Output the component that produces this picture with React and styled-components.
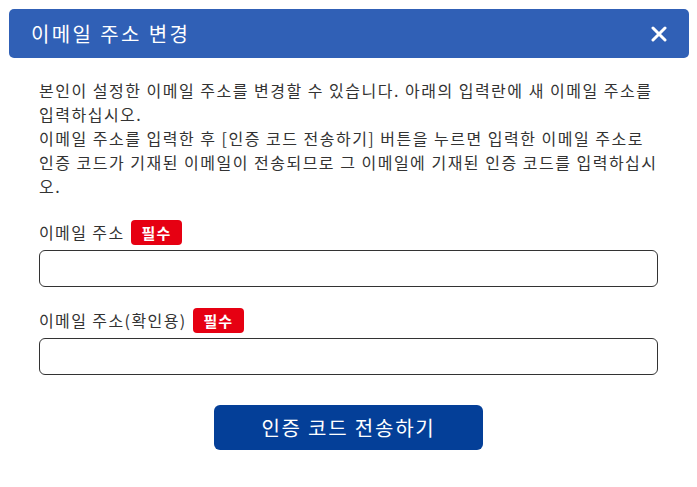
import React from "react";
import styled, { createGlobalStyle } from "styled-components";

const GlobalStyle = createGlobalStyle`
  body {
    margin: 0;
    background: #ffffff;
    font-family: "Noto Sans CJK KR", "Noto Sans", sans-serif;
  }
`;

function CloseIcon() {
  return (
    <svg width="16" height="16" viewBox="0 0 16 16">
      <path
        d="M2 2 L14 14 M14 2 L2 14"
        stroke="#ffffff"
        strokeWidth="3"
        strokeLinecap="round"
      />
    </svg>
  );
}

function App() {
  return (
    <Modal>
      <GlobalStyle />
      <Header>
        <Title>이메일 주소 변경</Title>
        <CloseButton type="button" aria-label="닫기">
          <CloseIcon />
        </CloseButton>
      </Header>
      <Body>
        <Description>
          본인이 설정한 이메일 주소를 변경할 수 있습니다. 아래의 입력란에 새 이메일 주소를 입력하십시오.
          <br />
          이메일 주소를 입력한 후 [인증 코드 전송하기] 버튼을 누르면 입력한 이메일 주소로 인증 코드가 기재된 이메일이 전송되므로 그 이메일에 기재된 인증 코드를 입력하십시오.
        </Description>
        <Field>
          <LabelRow>
            <Label>이메일 주소</Label>
            <Required>필수</Required>
          </LabelRow>
          <Input type="email" />
        </Field>
        <Field>
          <LabelRow>
            <Label>이메일 주소(확인용)</Label>
            <Required>필수</Required>
          </LabelRow>
          <Input type="email" />
        </Field>
        <SubmitButton type="button">인증 코드 전송하기</SubmitButton>
      </Body>
    </Modal>
  );
}

const Modal = styled.div`
  width: 697px;
  height: 487px;
  padding-top: 9px;
  box-sizing: border-box;
  background: #ffffff;
`;

const Header = styled.div`
  display: flex;
  align-items: center;
  justify-content: space-between;
  height: 49px;
  margin: 0 8px 0 9px;
  padding: 0 22px;
  background-color: #3060b6;
  border-radius: 5px;
`;

const Title = styled.h2`
  margin: 0;
  font-size: 20px;
  font-weight: 400;
  letter-spacing: 2.4px;
  color: #ffffff;
`;

const CloseButton = styled.button`
  display: flex;
  align-items: center;
  justify-content: center;
  padding: 0;
  border: none;
  background: none;
  cursor: pointer;
`;

const Body = styled.div`
  display: flex;
  flex-direction: column;
  padding: 20px 39px 0 39px;
`;

const Description = styled.p`
  margin: 0;
  font-size: 16px;
  letter-spacing: 1.5px;
  line-height: 24px;
  color: #333333;
`;

const Field = styled.div`
  display: flex;
  flex-direction: column;
  gap: 5px;
  margin-top: 21px;

  & + & {
    margin-top: 20px;
  }
`;

const LabelRow = styled.div`
  display: flex;
  align-items: center;
  gap: 6px;
  height: 26px;
`;

const Label = styled.span`
  font-size: 16px;
  letter-spacing: 1.4px;
  color: #333333;
`;

const Required = styled.span`
  display: inline-flex;
  align-items: center;
  height: 25px;
  padding: 0 11px;
  border-radius: 4px;
  background-color: #e60012;
  color: #ffffff;
  font-size: 15px;
  font-weight: 700;
  letter-spacing: 1px;
`;

const Input = styled.input`
  box-sizing: border-box;
  width: 100%;
  height: 37px;
  border: 1px solid #333333;
  border-radius: 6px;
  padding: 0 10px;
  font-size: 15px;
  outline: none;
`;

const SubmitButton = styled.button`
  align-self: center;
  width: 269px;
  height: 45px;
  margin-top: 30px;
  border: none;
  border-radius: 6px;
  background-color: #043f98;
  color: #ffffff;
  font-family: "Noto Sans CJK KR", "Noto Sans", sans-serif;
  font-size: 20px;
  letter-spacing: 1.8px;
  cursor: pointer;
`;

export default App;
